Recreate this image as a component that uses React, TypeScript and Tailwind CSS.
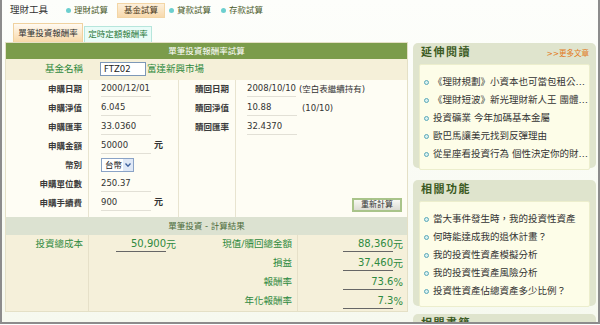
const font = { fontFamily: '"DejaVu Sans", "Noto Sans CJK TC", sans-serif' }

const Bullet = () => (
  <span className="inline-block w-[5px] h-[5px] rounded-full border border-[#5aa8b8] bg-[#d8f0f0] shrink-0" />
)

const NavItem = ({ label }: { label: string }) => (
  <div className="flex items-center gap-[3px] text-[8.5px] text-[#4b5b2b]">
    <span className="inline-block w-[5px] h-[5px] rounded-full bg-[#6ccfcf]" />
    {label}
  </div>
)

const Label = ({ text }: { text: string }) => (
  <div className="h-[19px] flex items-center justify-end pr-[6px] text-[8.5px] font-bold text-[#3a3a3a]">{text}</div>
)

const Field = ({ value, unit, w = 50 }: { value: string; unit?: string; w?: number }) => (
  <div className="h-[19px] flex items-center pl-[12px] text-[8.5px] text-[#333]">
    <span className="border-b border-[#e2e0d6] h-[15px] flex items-center" style={{ width: w }}>{value}</span>
    {unit && <span className="ml-[3px] text-[9px] font-bold">{unit}</span>}
  </div>
)

const Result = ({ value, unit }: { value: string; unit: string }) => (
  <div className="h-[19px] flex items-center justify-end text-[10px] text-[#2f8a40]">
    <span className="w-[50px] text-right border-b border-[#666] leading-[14px]">{value}</span>
    <span>{unit}</span>
  </div>
)

const ResLabel = ({ text }: { text: string }) => (
  <div className="h-[19px] flex items-center justify-end pr-[5px] text-[9.5px] text-[#2f8a40]">{text}</div>
)

const SideBox = ({ title, more, items, className }: { title: string; more?: boolean; items: string[]; className: string }) => (
  <div className={`rounded-[5px] bg-[#dfe4cd] px-[6px] pb-[5px] ${className}`}>
    <div className="h-[21px] flex items-center justify-between pl-[2px]">
      <span className="text-[11px] font-bold tracking-[1.5px] text-[#3b5a22]">{title}</span>
      {more && <span className="text-[7.5px] text-[#e27a1c] pr-[1px]">{">>"}更多文章</span>}
    </div>
    <div className="bg-[#fdfde8] border border-[#eceecd] rounded-[2px] pt-[8px] pb-[6px]">
      {items.map((t) => (
        <div key={t} className="h-[18px] flex items-center gap-[4px] pl-[4px] text-[9.5px] text-[#333] whitespace-nowrap overflow-hidden">
          <Bullet />
          <span>{t}</span>
        </div>
      ))}
    </div>
  </div>
)

export default function App() {
  return (
    <div style={font} className="w-[600px] h-[324px] overflow-hidden border-x-2 border-b-2 border-[#8c8c8c] bg-gradient-to-b from-[#fdfefb] to-[#f6f9ef]">
      <div className="h-[21px] flex items-center pl-[8px]">
        <span className="text-[9.5px] text-[#333] w-[56px]">理財工具</span>
        <NavItem label="理財試算" />
        <div className="ml-[9px] h-[15px] px-[6px] flex items-center text-[8.5px] text-[#4b3b1b] bg-gradient-to-b from-[#fdf0dc] to-[#f7d9ac] border border-[#f3d6a6]">基金試算</div>
        <div className="ml-[4px]"><NavItem label="貸款試算" /></div>
        <div className="ml-[10px]"><NavItem label="存款試算" /></div>
      </div>
      <div className="flex pl-[3px]">
        <div className="w-[403px] flex flex-col">
          <div className="h-[21px] flex items-end pl-[8px]">
            <div className="w-[70px] h-[19px] flex items-center justify-center text-[8.5px] text-[#333] bg-gradient-to-b from-[#fffaf2] to-[#f8d8a8] border border-[#f0d2a0] border-b-0">單筆投資報酬率</div>
            <div className="ml-[1px] w-[68px] h-[16px] flex items-center justify-center text-[8.5px] text-[#2b7a3a] bg-[#eafcf8] border border-[#b6e6dc] border-b-0">定時定額報酬率</div>
          </div>
          <div className="h-[270px] border border-[#e4e0c6] flex flex-col">
            <div className="h-[16px] bg-[#7b9c4b] flex items-center justify-center text-[8.5px] text-white">單筆投資報酬率試算</div>
            <div className="h-[21px] bg-[#f5f0d9] flex items-center">
              <div className="w-[83px] text-right pr-[6px] text-[9.5px] text-[#2f8a40]">基金名稱</div>
              <div className="ml-[11px] w-[46px] h-[14px] border border-[#7d98b8] bg-white flex items-center pl-[3px] text-[8.5px] text-[#222]">FTZ02</div>
              <span className="ml-[1px] text-[9.5px] text-[#2f8a40]">富達新興市場</span>
            </div>
            <div className="h-[139px] bg-[#fefdf4] flex">
              <div className="w-[83px] border-r border-[#e8e4d0]">
                <Label text="申購日期" />
                <Label text="申購淨值" />
                <Label text="申購匯率" />
                <Label text="申購金額" />
                <Label text="幣別" />
                <Label text="申購單位數" />
                <Label text="申購手續費" />
              </div>
              <div className="w-[90px] border-r border-[#e8e4d0]">
                <Field value="2000/12/01" />
                <Field value="6.045" />
                <Field value="33.0360" />
                <Field value="50000" unit="元" />
                <div className="h-[19px] flex items-center pl-[12px]">
                  <div className="h-[14px] w-[33px] border border-[#8aa3c6] bg-white flex items-center justify-between pl-[3px] text-[8.5px] text-[#222]">
                    台幣
                    <span className="h-full w-[10px] bg-[#dfe8f6] flex items-center justify-center">
                      <svg width="6" height="4" viewBox="0 0 6 4"><path d="M0.5 0.5 L3 3.2 L5.5 0.5" stroke="#3b5f9c" strokeWidth="1.3" fill="none" /></svg>
                    </span>
                  </div>
                </div>
                <Field value="250.37" />
                <Field value="900" unit="元" />
              </div>
              <div className="w-[57px] border-r border-[#e8e4d0]">
                <Label text="贖回日期" />
                <Label text="贖回淨值" />
                <Label text="贖回匯率" />
              </div>
              <div className="flex-1 flex flex-col">
                <div className="h-[19px] flex items-center pl-[11px] text-[8.5px] text-[#333]">
                  <span className="border-b border-[#e2e0d6] h-[15px] flex items-center">2008/10/10</span>
                  <span className="ml-[3px]">(空白表繼續持有)</span>
                </div>
                <div className="h-[19px] flex items-center pl-[11px] text-[8.5px] text-[#333]">
                  <span className="border-b border-[#e2e0d6] h-[15px] w-[50px] flex items-center">10.88</span>
                  <span className="ml-[5px]">(10/10)</span>
                </div>
                <div className="h-[19px] flex items-center pl-[11px] text-[8.5px] text-[#333]">
                  <span className="border-b border-[#e2e0d6] h-[15px] w-[50px] flex items-center">32.4370</span>
                </div>
                <div className="flex-1 flex items-end justify-end pr-[5px] pb-[5px]">
                  <div className="w-[50px] h-[14px] border-2 border-[#a9c48a] bg-gradient-to-b from-[#f8f8f4] to-[#dcdcd4] flex items-center justify-center text-[8px] text-[#333]">重新計算</div>
                </div>
              </div>
            </div>
            <div className="h-[18px] bg-[#dce2d1] flex items-center justify-center text-[8.5px] text-[#4b6b3b]">單筆投資 - 計算結果</div>
            <div className="flex-1 bg-[#f5f0da] flex">
              <div className="w-[83px] border-r border-[#e6e0c8]">
                <ResLabel text="投資總成本" />
              </div>
              <div className="w-[209px] border-r border-[#e6e0c8] flex">
                <div className="w-[90px] pr-[3px]">
                  <Result value="50,900" unit="元" />
                </div>
                <div className="flex-1">
                  <ResLabel text="現值/贖回總金額" />
                  <ResLabel text="損益" />
                  <ResLabel text="報酬率" />
                  <ResLabel text="年化報酬率" />
                </div>
              </div>
              <div className="flex-1 pr-[4px]">
                <Result value="88,360" unit="元" />
                <Result value="37,460" unit="元" />
                <Result value="73.6" unit="%" />
                <Result value="7.3" unit="%" />
              </div>
            </div>
          </div>
        </div>
        <div className="ml-[5px] w-[183px] pt-[22px] flex flex-col">
          <SideBox
            title="延伸閱讀"
            more
            className="h-[125px]"
            items={[
              "《理財規劃》小資本也可當包租公…",
              "《理財短波》新光理財新人王 團體…",
              "投資礦業 今年加碼基本金屬",
              "歐巴馬讓美元找到反彈理由",
              "從星座看投資行為 個性決定你的財…",
            ]}
          />
          <SideBox
            title="相關功能"
            className="mt-[12px] h-[126px]"
            items={[
              "當大事件發生時，我的投資性資產",
              "何時能達成我的退休計畫？",
              "我的投資性資產模擬分析",
              "我的投資性資產風險分析",
              "投資性資產佔總資產多少比例？",
            ]}
          />
          <div className="mt-[8px] rounded-t-[5px] bg-[#dfe4cd] px-[8px] h-[20px] flex items-center">
            <span className="text-[11px] font-bold tracking-[1.5px] text-[#3b5a22]">相關書籍</span>
          </div>
        </div>
      </div>
    </div>
  )
}
